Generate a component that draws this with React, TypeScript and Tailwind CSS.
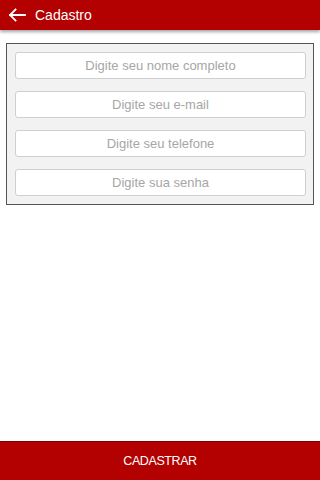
const fields = [
  'Digite seu nome completo',
  'Digite seu e-mail',
  'Digite seu telefone',
  'Digite sua senha',
];

function BackArrow() {
  return (
    <svg width="18" height="14" viewBox="0 0 18 14" fill="none" className="shrink-0">
      <path
        d="M17 7H2M7.5 1.5L2 7l5.5 5.5"
        stroke="white"
        strokeWidth="1.8"
        strokeLinecap="square"
      />
    </svg>
  );
}

export default function App() {
  return (
    <div
      className="relative flex h-[480px] w-[320px] flex-col bg-white"
      style={{ fontFamily: '"Liberation Sans", Arial, sans-serif' }}
    >
      <header className="z-10 flex h-[30px] items-center gap-[9px] bg-[#b30000] pl-[8px] shadow-[0_2px_3px_rgba(0,0,0,0.35)]">
        <BackArrow />
        <span className="text-[14px] text-white">Cadastro</span>
      </header>

      <main className="flex-1 pt-[13px]">
        <div className="mx-[6px] flex flex-col gap-[12px] border border-[#555] bg-[#f2f2f2] pb-[8px] pl-[8px] pr-[7px] pt-[8px]">
          {fields.map((f) => (
            <input
              key={f}
              placeholder={f}
              className="h-[27px] w-full rounded-[3px] border border-[#cfcfcf] bg-white text-center text-[13px] text-[#444] outline-none placeholder:text-[#a6a6a6]"
            />
          ))}
        </div>
      </main>

      <button className="h-[39px] w-full border-t border-[#7a0000] bg-[#b30000] text-[12.5px] tracking-[-0.4px] text-white">
        CADASTRAR
      </button>
    </div>
  );
}
